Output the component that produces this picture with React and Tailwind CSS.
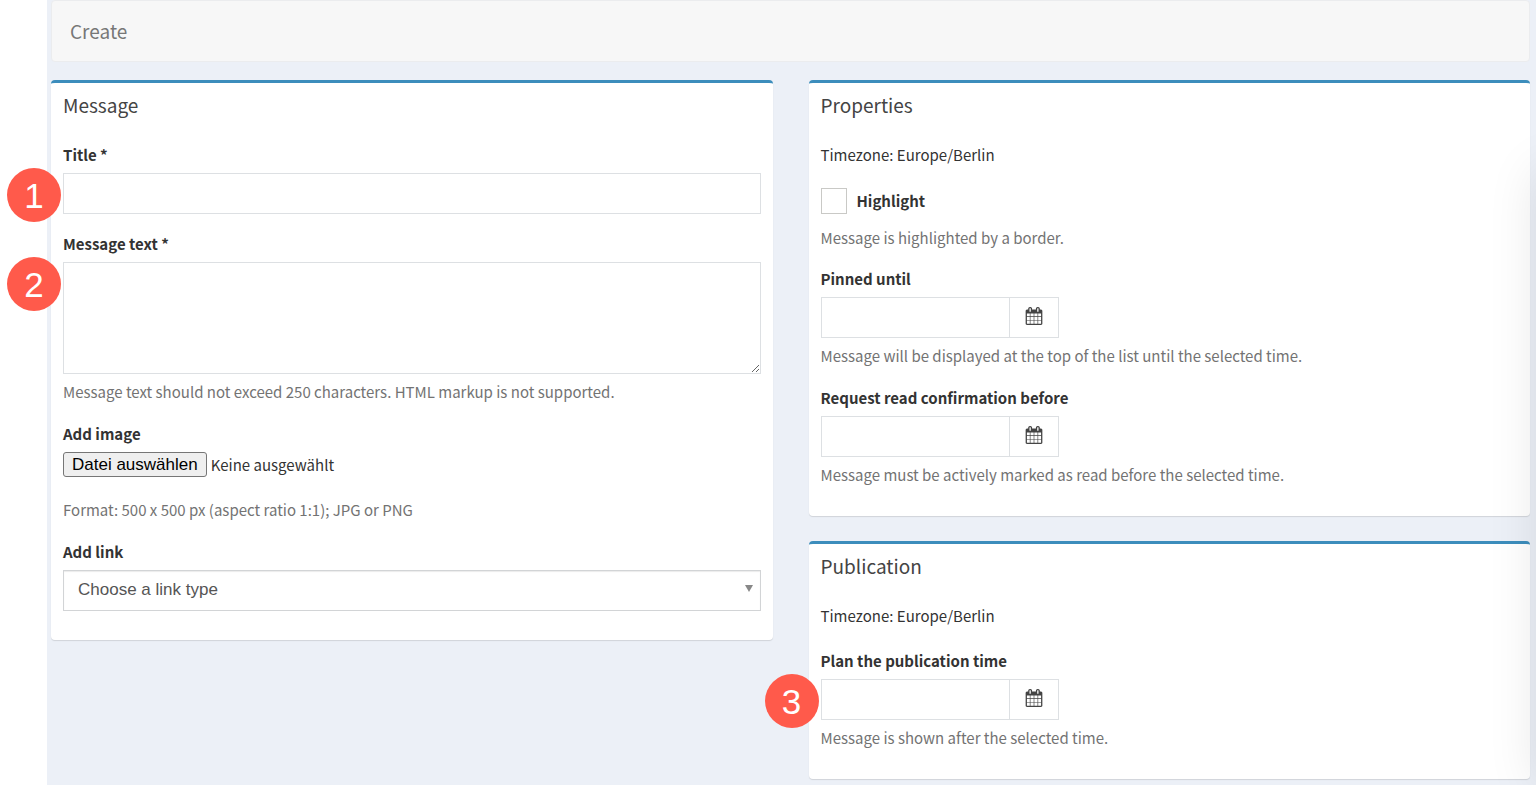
import React, { useRef } from 'react';

function CalendarIcon() {
  return (
    <svg viewBox="0 0 1792 1792" className="w-[18px] h-[18px]" fill="currentColor" fillRule="evenodd" aria-hidden="true">
      <path d="M192 1664h288v-288h-288v288zM544 1664h320v-288h-320v288zM192 1312h288v-320h-288v320zM544 1312h320v-320h-320v320zM192 928h288v-288h-288v288zM928 1664h320v-288h-320v288zM544 928h320v-288h-320v288zM1312 1664h288v-288h-288v288zM928 1312h320v-320h-320v320zM576 448v-288q0 -13 -9.5 -22.5t-22.5 -9.5h-64q-13 0 -22.5 9.5t-9.5 22.5v288q0 13 9.5 22.5t22.5 9.5h64q13 0 22.5 -9.5t9.5 -22.5zM1312 1312h288v-320h-288v320zM928 928h320v-288h-320v288zM1312 928h288v-288h-288v288zM1344 448v-288q0 -13 -9.5 -22.5t-22.5 -9.5h-64q-13 0 -22.5 9.5t-9.5 22.5v288q0 13 9.5 22.5t22.5 9.5h64q13 0 22.5 -9.5t9.5 -22.5zM1728 384v1280q0 52 -38 90t-90 38h-1408q-52 0 -90 -38t-38 -90v-1280q0 -52 38 -90t90 -38h128v-96q0 -66 47 -113t113 -47h64q66 0 113 47t47 113v96h384v-96q0 -66 47 -113t113 -47h64q66 0 113 47t47 113v96h128q52 0 90 38t38 90z" />
    </svg>
  );
}

function Panel({ title, children }) {
  return (
    <section className="rounded-[4px] border-t-[3px] border-[#3c8dbc] bg-white px-3 pt-[9px] pb-[29px] shadow-[0_1px_1px_rgba(0,0,0,0.12)]">
      <h2 className="mb-[25px] text-[19px] leading-[26px] text-[#444]">{title}</h2>
      {children}
    </section>
  );
}

function Label({ htmlFor, children }) {
  return (
    <label htmlFor={htmlFor} className="mb-[6px] block w-fit font-bold">
      {children}
    </label>
  );
}

function Help({ children }) {
  return <p className="mt-[6px] text-[#737373]">{children}</p>;
}

// Numbered marker that hangs off the left side of a field
function Marker({ children }) {
  return (
    <span className="absolute top-[-5px] right-full mr-[2px] grid size-[54px] place-items-center rounded-full bg-[#ff5a4b] font-['Liberation_Sans',sans-serif] text-[35px] leading-none text-white">
      {children}
    </span>
  );
}

function DateField({ id, label, help, marker }) {
  return (
    <div>
      <Label htmlFor={id}>{label}</Label>
      <div className="relative flex w-[238px]">
        {marker && <Marker>{marker}</Marker>}
        <input id={id} type="text" className="h-[41px] min-w-0 flex-1 border border-[#dde0e3] bg-white px-3 outline-none" />
        <button
          type="button"
          aria-label={`Pick a date: ${label}`}
          className="grid h-[41px] w-[49px] place-items-center border border-l-0 border-[#dde0e3] bg-white pb-[3px] text-[#444]"
        >
          <CalendarIcon />
        </button>
      </div>
      <Help>{help}</Help>
    </div>
  );
}

function FileField() {
  const input = useRef(null);
  return (
    <div>
      <Label htmlFor="image">Add image</Label>
      <div className="relative mb-[21px] flex items-center gap-1">
        <input ref={input} id="image" type="file" tabIndex={-1} className="sr-only" />
        <button
          type="button"
          onClick={() => input.current.click()}
          className="h-[25px] rounded-[3px] border border-[#767676] bg-[#efefef] px-2 font-['Liberation_Sans',sans-serif] text-[17px] leading-[22px] text-black"
        >
          Datei auswählen
        </button>
        <span>Keine ausgewählt</span>
      </div>
      <p className="text-[#737373]">Format: 500 x 500 px (aspect ratio 1:1); JPG or PNG</p>
    </div>
  );
}

export default function App() {
  return (
    <div className="relative min-h-screen overflow-hidden bg-white pl-[47px] font-['Noto_Sans_CJK_SC',sans-serif] text-[15px] leading-6 text-[#333]">
      <main className="min-h-screen bg-[#ecf0f7] pr-[6px] pb-1 pl-1">
        <header className="mb-[18px] rounded-[4px] border border-[#ebecee] bg-[#f7f7f7] px-[18px] pt-4 pb-[17px]">
          <h1 className="text-[19px] leading-[27px] text-[#777]">Create</h1>
        </header>

        <form className="grid grid-cols-2 items-start gap-9">
          <Panel title="Message">
            <div className="flex flex-col gap-[18px]">
              <div>
                <Label htmlFor="title">Title *</Label>
                <div className="relative">
                  <Marker>1</Marker>
                  <input id="title" type="text" className="block h-[41px] w-full border border-[#dde0e3] bg-white px-3 outline-none" />
                </div>
              </div>

              <div>
                <Label htmlFor="text">Message text *</Label>
                <div className="relative">
                  <Marker>2</Marker>
                  <textarea id="text" className="block h-[112px] w-full resize border border-[#dde0e3] bg-white px-3 py-2 outline-none" />
                </div>
                <Help>Message text should not exceed 250 characters. HTML markup is not supported.</Help>
              </div>

              <FileField />

              <div>
                <Label htmlFor="link">Add link</Label>
                <div className="relative">
                  <select
                    id="link"
                    className="block h-[41px] w-full appearance-none border border-[#d2d4d6] bg-white px-[14px] pb-[2px] font-['Liberation_Sans',sans-serif] text-[17px] text-[#555] shadow-[inset_0_1px_1px_rgba(0,0,0,0.08)] outline-none"
                  >
                    <option>Choose a link type</option>
                  </select>
                  <svg viewBox="0 0 8 7" className="pointer-events-none absolute top-[15px] right-2 h-[7px] w-2" fill="#888" aria-hidden="true">
                    <path d="M0 0h8L4 7z" />
                  </svg>
                </div>
              </div>
            </div>
          </Panel>

          <div className="flex flex-col gap-[25px]">
            <Panel title="Properties">
              <p className="mb-[21px]">Timezone: Europe/Berlin</p>
              <div className="mb-3 flex items-center gap-[10px]">
                <input id="highlight" type="checkbox" className="size-[26px] appearance-none border border-[#c9c9c6] bg-white" />
                <label htmlFor="highlight" className="font-bold">
                  Highlight
                </label>
              </div>
              <p className="mb-[17px] text-[#737373]">Message is highlighted by a border.</p>
              <div className="flex flex-col gap-[18px]">
                <DateField
                  id="pinned"
                  label="Pinned until"
                  help="Message will be displayed at the top of the list until the selected time."
                />
                <DateField
                  id="confirmation"
                  label="Request read confirmation before"
                  help="Message must be actively marked as read before the selected time."
                />
              </div>
            </Panel>

            <Panel title="Publication">
              <p className="mb-[21px]">Timezone: Europe/Berlin</p>
              <DateField
                id="publication"
                label="Plan the publication time"
                help="Message is shown after the selected time."
                marker="3"
              />
            </Panel>
          </div>
        </form>
      </main>

      {/* Soft shade cast in from the right edge */}
      <div className="pointer-events-none absolute top-[170px] bottom-0 left-full w-20 shadow-[0_0_50px_rgba(0,0,0,0.1)]" />
    </div>
  );
}
